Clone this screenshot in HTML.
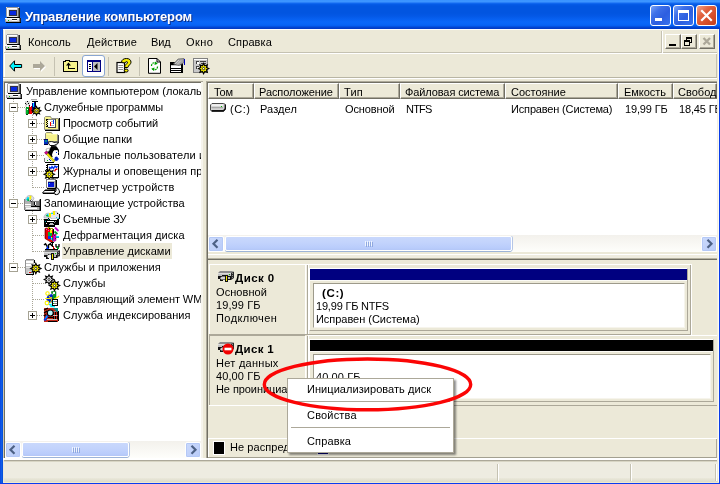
<!DOCTYPE html>
<html lang="ru"><head><meta charset="utf-8"><title>Управление компьютером</title>
<style>
*{box-sizing:border-box;margin:0;padding:0}
html,body{width:720px;height:484px;overflow:hidden;background:#ece9d8}
body{position:relative;font-family:"Liberation Sans","DejaVu Sans",sans-serif;font-size:11px;color:#000;line-height:13px;letter-spacing:-0.14px}
.a{position:absolute}
svg{position:absolute;overflow:visible}
.t{position:absolute;white-space:nowrap;height:13px;line-height:13px;will-change:transform}
.b{font-weight:bold}
#title{left:0;top:0;width:720px;height:29px;background:linear-gradient(180deg,#3a93ff 0,#3d95ff 1.5px,#2a80f8 2.5px,#0f66ee 3.5px,#055ae6 4.5px,#0255e0 6px,#0255e0 13px,#0458e6 16px,#0760f0 19px,#0a67f9 22px,#0866f8 24px,#0660f2 25.5px,#0452e2 26.5px,#0344d0 27.5px,#0238c0 29px)}
#title .cap{left:25px;top:9px;color:#fff;font-weight:bold;font-size:13px;letter-spacing:-0.12px;text-shadow:1px 1px 0 #0b2f8a;height:15px;line-height:15px}
#bl{left:0;top:29px;width:3px;height:455px;background:linear-gradient(90deg,#0838dc 0,#1262ea 1px,#0a58e2 2px,#0448d6 3px)}
#br{left:719px;top:29px;width:1px;height:455px;background:#0a3ce8}
#bb{left:0;top:483px;width:720px;height:1px;background:#0a3cf0}
.wb{border:1px solid;border-radius:3px}
.hdr{position:absolute;top:83px;height:17px;background:linear-gradient(180deg,#ebeadb 0,#ebeadb 13px,#e2dece 14px,#d6d2c2 15px,#cbc7b8 16px)}
.hc{position:absolute;top:83px;height:16px;background:#ece9d8;border-top:1px solid #fff;border-left:1px solid #fff;border-right:1px solid #716f64;border-bottom:1px solid #716f64;box-shadow:inset -1px -1px 0 #aca899}
.hsep{position:absolute;top:85px;width:2px;height:13px;background:linear-gradient(90deg,#c7c5b2 0,#c7c5b2 1px,#fff 1px)}
.sbtn{position:absolute;width:16px;height:16px;border:1px solid #fff;border-radius:2px;background:linear-gradient(135deg,#cbdafc,#b9cbf8);box-shadow:inset 0 0 0 1px #b4c8f6}
.thumb{position:absolute;height:15px;border:1px solid #fff;border-radius:2px;background:linear-gradient(180deg,#c9d8fc 0,#c2d3fc 6px,#b9ccfb 11px,#b3c7f7 13px);box-shadow:0 1px 0 #9db4d8,1px 0 0 #b5c6e6}
.track{position:absolute;height:17px;background:linear-gradient(180deg,#f3f1ec,#fefefb)}
.mi{position:absolute;left:307px}
</style></head><body>
<div id="title" class="a"><div class="t cap">Управление компьютером</div></div>
<svg style="left:5px;top:7px" width="16" height="16" viewBox="0 0 16 16" shape-rendering="crispEdges">
<rect x="1" y="0" width="13" height="10" fill="#e4e4e4"/><rect x="2" y="0" width="11" height="1" fill="#9a9a9a"/><rect x="1" y="1" width="1" height="9" fill="#a0a0a0"/><rect x="2" y="1" width="11" height="1" fill="#fff"/><rect x="2" y="1" width="1" height="8" fill="#fff"/>
<rect x="12" y="1" width="1" height="9" fill="#b0b0b0"/><rect x="13" y="1" width="1" height="9" fill="#606060"/><rect x="14" y="1" width="1" height="10" fill="#202020"/>
<rect x="4" y="3" width="8" height="6" fill="#303048"/><rect x="5" y="4" width="6" height="4" fill="#0828e0"/>
<rect x="2" y="10" width="13" height="1" fill="#000"/>
<rect x="0" y="11" width="15" height="4" fill="#e0e0e0"/><rect x="0" y="11" width="15" height="1" fill="#fff"/><rect x="0" y="12" width="1" height="3" fill="#a0a0a0"/>
<rect x="14" y="11" width="1" height="4" fill="#808080"/><rect x="15" y="11" width="1" height="5" fill="#202020"/><rect x="1" y="15" width="15" height="1" fill="#000"/><rect x="1" y="14" width="13" height="1" fill="#b0b0b0"/>
<rect x="3" y="13" width="1" height="1" fill="#00c000"/><rect x="7" y="12" width="5" height="1" fill="#202020"/><rect x="7" y="13" width="5" height="1" fill="#fff"/>
</svg>
<div id="bl" class="a"></div><div id="br" class="a"></div><div id="bb" class="a"></div>
<div class="a" style="left:650px;top:5px;width:21px;height:21px;border:1px solid #fff;border-radius:3px;background:linear-gradient(135deg,#7aa4f8 0,#3e70e8 30%,#2d5ee0 60%,#3872ee 100%)"><div class="a" style="left:4px;top:12px;width:7px;height:3px;background:#fff"></div></div>
<div class="a" style="left:673px;top:5px;width:21px;height:21px;border:1px solid #fff;border-radius:3px;background:linear-gradient(135deg,#7aa4f8 0,#3e70e8 30%,#2d5ee0 60%,#3872ee 100%)"><div class="a" style="left:4px;top:4px;width:11px;height:11px;border:1px solid #fff;border-top-width:3px"></div></div>
<div class="a" style="left:696px;top:5px;width:21px;height:21px;border:1px solid #fff;border-radius:3px;background:linear-gradient(135deg,#f0a48c 0,#e2633f 35%,#d44c28 70%,#c23e1c 100%)"><svg style="left:0;top:0" width="19" height="19" viewBox="0 0 19 19"><path d="M5 5L14 14M14 5L5 14" stroke="#fff" stroke-width="2.2" stroke-linecap="square"/></svg></div>
<div class="a" style="left:3px;top:29px;width:714px;height:1px;background:#fff"></div>
<div class="a" style="left:4px;top:29px;width:1px;height:48px;background:#fff"></div>
<svg style="left:5px;top:34px" width="16" height="16" viewBox="0 0 16 16" shape-rendering="crispEdges">
<rect x="1" y="0" width="13" height="10" fill="#e4e4e4"/><rect x="2" y="0" width="11" height="1" fill="#9a9a9a"/><rect x="1" y="1" width="1" height="9" fill="#a0a0a0"/><rect x="2" y="1" width="11" height="1" fill="#fff"/><rect x="2" y="1" width="1" height="8" fill="#fff"/>
<rect x="12" y="1" width="1" height="9" fill="#b0b0b0"/><rect x="13" y="1" width="1" height="9" fill="#606060"/><rect x="14" y="1" width="1" height="10" fill="#202020"/>
<rect x="4" y="3" width="8" height="6" fill="#303048"/><rect x="5" y="4" width="6" height="4" fill="#0828e0"/>
<rect x="2" y="10" width="13" height="1" fill="#000"/>
<rect x="0" y="11" width="15" height="4" fill="#e0e0e0"/><rect x="0" y="11" width="15" height="1" fill="#fff"/><rect x="0" y="12" width="1" height="3" fill="#a0a0a0"/>
<rect x="14" y="11" width="1" height="4" fill="#808080"/><rect x="15" y="11" width="1" height="5" fill="#202020"/><rect x="1" y="15" width="15" height="1" fill="#000"/><rect x="1" y="14" width="13" height="1" fill="#b0b0b0"/>
<rect x="3" y="13" width="1" height="1" fill="#00c000"/><rect x="7" y="12" width="5" height="1" fill="#202020"/><rect x="7" y="13" width="5" height="1" fill="#fff"/>
</svg>
<div class="t " style="left:28px;top:36px;letter-spacing:0.093px;">Консоль</div>
<div class="t " style="left:86.5px;top:36px;letter-spacing:0.205px;">Действие</div>
<div class="t " style="left:151.3px;top:36px;letter-spacing:-0.100px;">Вид</div>
<div class="t " style="left:186px;top:36px;letter-spacing:0.435px;">Окно</div>
<div class="t " style="left:228px;top:36px;letter-spacing:0.121px;">Справка</div>
<div class="a" style="left:4px;top:52px;width:713px;height:1px;background:#c5c2b2"></div>
<div class="a" style="left:4px;top:53px;width:713px;height:1px;background:#fff"></div>
<div class="a" style="left:665px;top:34px;width:16px;height:15px;background:#ece9d8;border-top:1px solid #fff;border-left:1px solid #fff;border-right:1px solid #716f64;border-bottom:1px solid #716f64;box-shadow:inset -1px -1px 0 #aca899"><div class="a" style="left:3px;top:9px;width:7px;height:2px;background:#000"></div></div>
<div class="a" style="left:681px;top:34px;width:16px;height:15px;background:#ece9d8;border-top:1px solid #fff;border-left:1px solid #fff;border-right:1px solid #716f64;border-bottom:1px solid #716f64;box-shadow:inset -1px -1px 0 #aca899"><div class="a" style="left:4px;top:2px;width:6px;height:6px;border:1px solid #000;border-top-width:2px"></div><div class="a" style="left:2px;top:5px;width:6px;height:6px;border:1px solid #000;border-top-width:2px;background:#ece9d8"></div></div>
<div class="a" style="left:699px;top:34px;width:16px;height:15px;background:#ece9d8;border-top:1px solid #fff;border-left:1px solid #fff;border-right:1px solid #716f64;border-bottom:1px solid #716f64;box-shadow:inset -1px -1px 0 #aca899"><svg style="left:0;top:0" width="14" height="13" viewBox="0 0 14 13"><path d="M3.5 3L10 9.5M10 3L3.5 9.5" stroke="#aca899" stroke-width="2.3"/></svg></div>
<div class="a" style="left:661px;top:31px;width:1px;height:22px;background:#c5c2b2"></div>
<div class="a" style="left:662px;top:31px;width:1px;height:22px;background:#fff"></div>
<div class="a" style="left:54px;top:57px;width:1px;height:19px;background:#c5c2b2"></div>
<div class="a" style="left:108px;top:57px;width:1px;height:19px;background:#c5c2b2"></div>
<div class="a" style="left:139px;top:57px;width:1px;height:19px;background:#c5c2b2"></div>
<svg style="left:9px;top:60px" width="14" height="12" viewBox="0 0 14 12"><path d="M5.500 0.800L0.700 6L5.500 11.200V7.500H12.600V4.500H5.500Z" fill="#00f6ff" stroke="#000" stroke-width="1" stroke-linejoin="miter"/></svg>
<svg style="left:33px;top:60px" width="14" height="13" viewBox="0 0 14 13"><path d="M7 1L12 6L7 11V8H0V4H7Z" fill="#fff" transform="translate(1,1)"/><path d="M7 1L12 6L7 11V8H0V4H7Z" fill="#aca899"/></svg>
<svg style="left:63px;top:59px" width="15" height="13" viewBox="0 0 15 13" shape-rendering="crispEdges"><path d="M0.5 2.5H2.5V1.5H6.5V2.5H14.5V12.5H0.5Z" fill="#f7f48c" stroke="#000"/><path d="M5 9.500H11.500M5.500 9.500V5" stroke="#000" fill="none" stroke-width="1.600"/><path d="M3 6.500L5.500 3.500L8 6.500Z" fill="#000" shape-rendering="auto"/></svg>
<div class="a" style="left:82px;top:55px;width:23px;height:22px;background:#fff;border:1px solid #8aa6d2;border-radius:3px"></div>
<svg style="left:87px;top:60px" width="14" height="12" viewBox="0 0 14 12" shape-rendering="crispEdges"><rect x="0" y="0" width="14" height="12" fill="#000080"/><rect x="1" y="2" width="4" height="9" fill="#fff"/><rect x="6" y="2" width="7" height="9" fill="#c0c0c0"/><path d="M10.500 3V10L7 6.500Z" fill="#000" shape-rendering="auto"/><rect x="2" y="4" width="2" height="1" fill="#000"/><rect x="2" y="6" width="2" height="1" fill="#000"/><rect x="2" y="8" width="2" height="1" fill="#000"/></svg>
<svg style="left:116px;top:58px" width="16" height="15" viewBox="0 0 16 15"><rect x="1" y="4.500" width="7.500" height="10" fill="#fff" stroke="#000" stroke-width="1.200"/><path d="M2.500 7.500H7M2.500 9.500H7M2.500 11.500H7" stroke="#8c8c8c"/><path d="M5.500 4.500C5.500 1.500 8 0.500 10.500 0.500C13.500 0.500 15 2.200 15 4.200C15 6.500 12.300 7.200 11.800 9.500H8.500C8.500 6.500 11.500 6 11.500 4.200C11.500 3.300 9.300 3.300 9 5Z" fill="#f4ec00" stroke="#000" stroke-width="1"/><ellipse cx="10.200" cy="12.600" rx="1.900" ry="1.500" fill="#f4ec00" stroke="#000"/></svg>
<svg style="left:148px;top:58px" width="13" height="16" viewBox="0 0 13 16"><path d="M0.500 0.500H9L12.500 4V15.300H0.500Z" fill="#fff" stroke="#000"/><path d="M9 0.500V4H12.500" fill="none" stroke="#000"/><path d="M3.500 8A3 3 0 0 1 8.500 5.500M9.500 8.500A3 3 0 0 1 4.500 11" stroke="#00a000" stroke-width="1.200" fill="none" stroke-dasharray="2 0.700"/><path d="M7 3.500L9.800 5.800L6.500 7Z M6 13L3.200 10.700L6.500 9.500Z" fill="#00a000"/></svg>
<svg style="left:170px;top:58px" width="16" height="15" viewBox="0 0 16 15" shape-rendering="crispEdges"><rect x="0" y="4" width="13" height="11" fill="#000"/><rect x="1" y="7" width="10" height="7" fill="#fff"/><rect x="1" y="7" width="10" height="1" fill="#c8c8c8"/><rect x="1" y="10" width="10" height="1" fill="#000"/><rect x="1" y="12" width="10" height="1" fill="#000"/><path d="M3.500 6L8 1L14 0.500V4.500L9 7.500Z" fill="#a4a4a4" stroke="#606060" stroke-width="0.700" shape-rendering="auto"/><path d="M5 6L9 2M7 6.500L11 2.500" stroke="#e0e0e0" stroke-width="0.700" shape-rendering="auto"/><rect x="14" y="1" width="1" height="6" fill="#0000c0"/></svg>
<svg style="left:193px;top:58px" width="17" height="16" viewBox="0 0 17 16" shape-rendering="crispEdges"><rect x="0" y="0" width="15" height="15" fill="#808080"/><rect x="1" y="1" width="13" height="13" fill="#c8c8c8"/><rect x="1" y="1" width="13" height="1" fill="#fff"/><rect x="3" y="3" width="3" height="3" fill="#fff"/><rect x="3" y="3" width="3" height="1" fill="#404040"/><rect x="3" y="3" width="1" height="3" fill="#404040"/><rect x="7" y="3" width="6" height="1" fill="#404040"/><rect x="8" y="5" width="5" height="1" fill="#404040"/><rect x="3" y="8" width="3" height="3" fill="#fff"/><rect x="3" y="8" width="3" height="1" fill="#404040"/><rect x="3" y="8" width="1" height="3" fill="#404040"/><rect x="7" y="7" width="4" height="1" fill="#404040"/><path d="M10.60 5.40L11.75 7.81L14.28 6.92L13.39 9.45L15.80 10.60L13.39 11.75L14.28 14.28L11.75 13.39L10.60 15.80L9.45 13.39L6.92 14.28L7.81 11.75L5.40 10.60L7.81 9.45L6.92 6.92L9.45 7.81Z" fill="#f4ec00" stroke="#000" stroke-width="1.1" shape-rendering="auto"/><circle cx="10.6" cy="10.6" r="1.14" fill="#fff" stroke="#000" stroke-width="0.700" shape-rendering="auto"/></svg>
<div class="a" style="left:716px;top:54px;width:1px;height:23px;background:#c5c2b2"></div>
<div class="a" style="left:3px;top:77px;width:714px;height:1px;background:#b9b6a4"></div>
<div class="a" style="left:3px;top:78px;width:714px;height:1px;background:#fff"></div>
<div class="a" style="left:3px;top:81px;width:200px;height:1px;background:#aca899"></div>
<div class="a" style="left:4px;top:82px;width:199px;height:1px;background:#716f64"></div>
<div class="a" style="left:3px;top:81px;width:1px;height:378px;background:#cfc8ad"></div>
<div class="a" style="left:4px;top:82px;width:1px;height:377px;background:#716f64"></div>
<div class="a" style="left:5px;top:83px;width:196px;height:375px;background:#fff"></div>
<div class="a" style="left:201px;top:82px;width:2px;height:377px;background:#f6f4ec"></div>
<div class="a" style="left:3px;top:458px;width:203px;height:2px;background:#fff"></div>
<div class="a" style="left:5px;top:83px;width:196px;height:358px;overflow:hidden">
<div class="a" style="left:-5px;top:-83px;width:720px;height:484px">
<div class="a" style="left:13px;top:99px;width:1px;height:169px;background:repeating-linear-gradient(180deg,#a9a697 0,#a9a697 1px,transparent 1px,transparent 2px)"></div>
<div class="a" style="left:32px;top:115px;width:1px;height:73px;background:repeating-linear-gradient(180deg,#a9a697 0,#a9a697 1px,transparent 1px,transparent 2px)"></div>
<div class="a" style="left:32px;top:211px;width:1px;height:41px;background:repeating-linear-gradient(180deg,#a9a697 0,#a9a697 1px,transparent 1px,transparent 2px)"></div>
<div class="a" style="left:32px;top:275px;width:1px;height:41px;background:repeating-linear-gradient(180deg,#a9a697 0,#a9a697 1px,transparent 1px,transparent 2px)"></div>
<svg style="left:6px;top:83px" width="16" height="16" viewBox="0 0 16 16" shape-rendering="crispEdges">
<rect x="1" y="0" width="13" height="10" fill="#e4e4e4"/><rect x="2" y="0" width="11" height="1" fill="#9a9a9a"/><rect x="1" y="1" width="1" height="9" fill="#a0a0a0"/><rect x="2" y="1" width="11" height="1" fill="#fff"/><rect x="2" y="1" width="1" height="8" fill="#fff"/>
<rect x="12" y="1" width="1" height="9" fill="#b0b0b0"/><rect x="13" y="1" width="1" height="9" fill="#606060"/><rect x="14" y="1" width="1" height="10" fill="#202020"/>
<rect x="4" y="3" width="8" height="6" fill="#303048"/><rect x="5" y="4" width="6" height="4" fill="#0828e0"/>
<rect x="2" y="10" width="13" height="1" fill="#000"/>
<rect x="0" y="11" width="15" height="4" fill="#e0e0e0"/><rect x="0" y="11" width="15" height="1" fill="#fff"/><rect x="0" y="12" width="1" height="3" fill="#a0a0a0"/>
<rect x="14" y="11" width="1" height="4" fill="#808080"/><rect x="15" y="11" width="1" height="5" fill="#202020"/><rect x="1" y="15" width="15" height="1" fill="#000"/><rect x="1" y="14" width="13" height="1" fill="#b0b0b0"/>
<rect x="3" y="13" width="1" height="1" fill="#00c000"/><rect x="7" y="12" width="5" height="1" fill="#202020"/><rect x="7" y="13" width="5" height="1" fill="#fff"/>
</svg>
<div class="t " style="left:26px;top:85px;letter-spacing:-0.008px;">Управление компьютером (локаль</div>
<div class="a" style="left:18px;top:107px;width:7px;height:1px;background:repeating-linear-gradient(90deg,#a9a697 0,#a9a697 1px,transparent 1px,transparent 2px)"></div>
<div class="a" style="left:9px;top:103px;width:9px;height:9px;border:1px solid #a5a293;background:#fff"><div class="a" style="left:1px;top:3px;width:5px;height:1px;background:#000"></div></div>
<svg style="left:25px;top:99px" width="16" height="16" viewBox="0 0 16 16" shape-rendering="crispEdges"><rect x="6" y="0" width="6" height="1" fill="#a8a8a8"/><rect x="5" y="1" width="7" height="1" fill="#ececec"/><rect x="7" y="2" width="6" height="1" fill="#000"/><rect x="10" y="3" width="1" height="5" fill="#000"/><rect x="0" y="2" width="5" height="6" fill="#dcdcdc"/><rect x="2" y="2" width="1" height="1" fill="#000"/><rect x="0" y="4" width="1" height="1" fill="#000"/><rect x="3" y="4" width="1" height="1" fill="#000"/><rect x="1" y="5" width="1" height="1" fill="#808080"/><rect x="4" y="6" width="1" height="2" fill="#000"/><rect x="2" y="6" width="1" height="2" fill="#fff"/><rect x="1" y="8" width="3" height="7" fill="#00b428"/><rect x="1" y="8" width="1" height="1" fill="#007818"/><rect x="2" y="10" width="1" height="1" fill="#fff"/><rect x="3" y="9" width="1" height="6" fill="#006414"/><rect x="0" y="9" width="1" height="6" fill="#c8c8c8"/><rect x="1" y="15" width="2" height="1" fill="#004c10"/><rect x="4" y="7" width="3" height="8" fill="#f00000"/><rect x="4" y="6" width="1" height="1" fill="#000"/><rect x="5" y="7" width="1" height="1" fill="#fff"/><rect x="4" y="8" width="1" height="6" fill="#b00000"/><rect x="7" y="8" width="1" height="6" fill="#400000"/><rect x="7" y="3" width="3" height="8" fill="#0000a8"/><rect x="8" y="4" width="1" height="5" fill="#00e4ff"/><rect x="7" y="3" width="2" height="1" fill="#fff"/><path d="M11.50 7.50L12.45 9.50L14.54 8.76L13.80 10.85L15.80 11.80L13.80 12.75L14.54 14.84L12.45 14.10L11.50 16.10L10.55 14.10L8.46 14.84L9.20 12.75L7.20 11.80L9.20 10.85L8.46 8.76L10.55 9.50Z" fill="#f4ec00" stroke="#000" stroke-width="1.1" shape-rendering="auto"/><circle cx="11.5" cy="11.8" r="0.95" fill="#fff" stroke="#000" stroke-width="0.700" shape-rendering="auto"/></svg>
<div class="t " style="left:44px;top:101px;letter-spacing:-0.067px;">Служебные программы</div>
<div class="a" style="left:37px;top:123px;width:7px;height:1px;background:repeating-linear-gradient(90deg,#a9a697 0,#a9a697 1px,transparent 1px,transparent 2px)"></div>
<div class="a" style="left:28px;top:119px;width:9px;height:9px;border:1px solid #a5a293;background:#fff"><div class="a" style="left:1px;top:3px;width:5px;height:1px;background:#000"></div><div class="a" style="left:3px;top:1px;width:1px;height:5px;background:#000"></div></div>
<svg style="left:44px;top:115px" width="16" height="16" viewBox="0 0 16 16" shape-rendering="crispEdges"><path d="M0.500 2.500V14.500H14.500V3.500H7.500L6.500 1.500H1.500Z" fill="#f6f28a" stroke="#909080" stroke-width="1" shape-rendering="auto"/><rect x="15" y="3" width="1" height="13" fill="#000"/><rect x="1" y="15" width="15" height="1" fill="#000"/><rect x="14" y="4" width="1" height="11" fill="#606060"/><rect x="4" y="4" width="8" height="9" fill="#fff"/><rect x="4" y="4" width="8" height="1" fill="#808080"/><rect x="4" y="12" width="8" height="1" fill="#404040"/><rect x="11" y="4" width="1" height="9" fill="#404040"/><rect x="2" y="4" width="2" height="8" fill="#000"/><rect x="3" y="5" width="1" height="1" fill="#f6f28a"/><rect x="3" y="7" width="1" height="1" fill="#f6f28a"/><rect x="3" y="9" width="1" height="1" fill="#f6f28a"/><rect x="2" y="6" width="1" height="1" fill="#f6f28a"/><rect x="2" y="8" width="1" height="1" fill="#f6f28a"/><rect x="2" y="10" width="1" height="1" fill="#f6f28a"/><rect x="9" y="5" width="1" height="4" fill="#0040f0"/><rect x="6" y="7" width="1" height="4" fill="#f00000"/><rect x="7" y="6" width="2" height="1" fill="#b0b0b0"/><rect x="7" y="10" width="3" height="1" fill="#b0b0b0"/><rect x="7" y="8" width="2" height="1" fill="#d0d0d0"/></svg>
<div class="t " style="left:63px;top:117px;letter-spacing:-0.098px;">Просмотр событий</div>
<div class="a" style="left:37px;top:139px;width:7px;height:1px;background:repeating-linear-gradient(90deg,#a9a697 0,#a9a697 1px,transparent 1px,transparent 2px)"></div>
<div class="a" style="left:28px;top:135px;width:9px;height:9px;border:1px solid #a5a293;background:#fff"><div class="a" style="left:1px;top:3px;width:5px;height:1px;background:#000"></div><div class="a" style="left:3px;top:1px;width:1px;height:5px;background:#000"></div></div>
<svg style="left:44px;top:131px" width="16" height="16" viewBox="0 0 16 16" shape-rendering="crispEdges"><path d="M1.500 2.500V10.500H13.500V3.500H8.500L7.500 1.500H2.500Z" fill="#f6f28a" stroke="#909080" stroke-width="1" shape-rendering="auto"/><rect x="14" y="4" width="1" height="8" fill="#404040"/><rect x="2" y="3" width="11" height="1" fill="#fbfaa8"/><rect x="0" y="8" width="4" height="6" fill="#0030c0"/><rect x="0" y="8" width="4" height="1" fill="#000060"/><rect x="1" y="9" width="2" height="2" fill="#008890"/><rect x="0" y="13" width="4" height="1" fill="#000040"/><path d="M4 11.500C6 10 9 10.500 10 11.500L14 11V12.500L10 14.500H6Z" fill="#fff" stroke="#000" stroke-width="0.9" shape-rendering="auto"/><path d="M7 15.200H12.500" fill="none" stroke="#000" stroke-width="1.4" shape-rendering="auto"/></svg>
<div class="t " style="left:63px;top:133px;letter-spacing:0.099px;">Общие папки</div>
<div class="a" style="left:37px;top:155px;width:7px;height:1px;background:repeating-linear-gradient(90deg,#a9a697 0,#a9a697 1px,transparent 1px,transparent 2px)"></div>
<div class="a" style="left:28px;top:151px;width:9px;height:9px;border:1px solid #a5a293;background:#fff"><div class="a" style="left:1px;top:3px;width:5px;height:1px;background:#000"></div><div class="a" style="left:3px;top:1px;width:1px;height:5px;background:#000"></div></div>
<svg style="left:44px;top:147px" width="16" height="16" viewBox="0 0 16 16" shape-rendering="crispEdges"><path d="M7 0H13L15 3V6H13L11 3L9 5L8 8L9 10L7 12L4 8L3 4Z" fill="#000" shape-rendering="auto"/><path d="M2 2L6 1L5 4L2.500 5Z" fill="#fff" stroke="#909090" stroke-width="0.6" shape-rendering="auto"/><path d="M10 3.500L13.500 3L14.500 6L13 9.500L12 12H9L8.500 8L9 5Z" fill="#fff" shape-rendering="auto"/><rect x="12" y="5" width="1" height="1" fill="#0030e0"/><rect x="14" y="6" width="1" height="2" fill="#000"/><path d="M11 10L13 9.500L15 12L13 14L10 13.500Z" fill="#0020c0" shape-rendering="auto"/><rect x="1" y="10" width="8" height="5" fill="#f4f4f4"/><rect x="1" y="15" width="9" height="1" fill="#000"/><rect x="0" y="11" width="1" height="4" fill="#808080"/><rect x="3" y="13" width="1" height="1" fill="#00b000"/><rect x="5" y="12" width="1" height="1" fill="#0020c0"/><rect x="6" y="13" width="1" height="1" fill="#0020c0"/><path d="M1 6L3 5L11 14L9.500 15Z" fill="#f4ec00" stroke="#8a8000" stroke-width="0.5" shape-rendering="auto"/><path d="M0.500 5.500L2.500 4L4 6L2 7.500Z" fill="#d000a0" stroke="#800040" stroke-width="0.5" shape-rendering="auto"/></svg>
<div class="t " style="left:63px;top:149px;letter-spacing:0.143px;">Локальные пользователи и</div>
<div class="a" style="left:37px;top:171px;width:7px;height:1px;background:repeating-linear-gradient(90deg,#a9a697 0,#a9a697 1px,transparent 1px,transparent 2px)"></div>
<div class="a" style="left:28px;top:167px;width:9px;height:9px;border:1px solid #a5a293;background:#fff"><div class="a" style="left:1px;top:3px;width:5px;height:1px;background:#000"></div><div class="a" style="left:3px;top:1px;width:1px;height:5px;background:#000"></div></div>
<svg style="left:44px;top:163px" width="16" height="16" viewBox="0 0 16 16" shape-rendering="crispEdges"><rect x="3" y="1" width="12" height="14" fill="#000"/><rect x="4" y="2" width="10" height="12" fill="#fff"/><rect x="2" y="2" width="1" height="1" fill="#000"/><rect x="2" y="4" width="1" height="1" fill="#000"/><rect x="2" y="6" width="1" height="1" fill="#000"/><rect x="7" y="15" width="7" height="1" fill="#808080"/><path d="M5 4L7 5.500L8 3.500L9.500 5.500L11 3L12.500 4.500L13.500 3" fill="none" stroke="#0030f0" stroke-width="1.3" shape-rendering="auto"/><path d="M10.500 8.500L11.500 6.500L13.500 6" fill="none" stroke="#f00000" stroke-width="1.4" shape-rendering="auto"/><path d="M5.30 6.10L6.45 8.51L8.98 7.62L8.09 10.15L10.50 11.30L8.09 12.45L8.98 14.98L6.45 14.09L5.30 16.50L4.15 14.09L1.62 14.98L2.51 12.45L0.10 11.30L2.51 10.15L1.62 7.62L4.15 8.51Z" fill="#f4ec00" stroke="#000" stroke-width="1.1" shape-rendering="auto"/><circle cx="5.3" cy="11.3" r="1.14" fill="#fff" stroke="#000" stroke-width="0.700" shape-rendering="auto"/></svg>
<div class="t " style="left:63px;top:165px;letter-spacing:0.027px;">Журналы и оповещения пр</div>
<div class="a" style="left:33px;top:187px;width:11px;height:1px;background:repeating-linear-gradient(90deg,#a9a697 0,#a9a697 1px,transparent 1px,transparent 2px)"></div>
<svg style="left:44px;top:179px" width="16" height="16" viewBox="0 0 16 16" shape-rendering="crispEdges"><rect x="2" y="0" width="10" height="9" fill="#b8b8b8"/><rect x="2" y="0" width="10" height="1" fill="#808080"/><rect x="2" y="1" width="1" height="8" fill="#808080"/><rect x="3" y="1" width="8" height="1" fill="#fff"/><rect x="3" y="2" width="1" height="6" fill="#fff"/><rect x="11" y="1" width="1" height="9" fill="#606060"/><rect x="12" y="1" width="1" height="9" fill="#000"/><rect x="3" y="9" width="9" height="1" fill="#000"/><rect x="4" y="3" width="6" height="5" fill="#0818d8"/><rect x="5" y="4" width="1" height="1" fill="#00e0ff"/><rect x="4" y="3" width="6" height="1" fill="#000090"/><path d="M1 11L11.500 10.500L10 14H-1.500Z" fill="#fff" stroke="#000" stroke-width="0.9" shape-rendering="auto"/><rect x="1" y="11" width="10" height="1" fill="#000"/><rect x="2" y="12" width="1" height="1" fill="#fff"/><rect x="4" y="12" width="1" height="1" fill="#fff"/><rect x="6" y="12" width="1" height="1" fill="#fff"/><rect x="8" y="12" width="1" height="1" fill="#fff"/><rect x="-1" y="14" width="11" height="1" fill="#000"/><path d="M12 8C14 9 15.500 11 15.500 13C15.500 15 13 16 11 15.500L10.500 13.500L12 12Z" fill="#f0f0f0" stroke="#000" stroke-width="1" shape-rendering="auto"/></svg>
<div class="t " style="left:63px;top:181px;letter-spacing:0.214px;">Диспетчер устройств</div>
<div class="a" style="left:18px;top:203px;width:7px;height:1px;background:repeating-linear-gradient(90deg,#a9a697 0,#a9a697 1px,transparent 1px,transparent 2px)"></div>
<div class="a" style="left:9px;top:199px;width:9px;height:9px;border:1px solid #a5a293;background:#fff"><div class="a" style="left:1px;top:3px;width:5px;height:1px;background:#000"></div></div>
<svg style="left:25px;top:195px" width="16" height="16" viewBox="0 0 16 16" shape-rendering="crispEdges"><rect x="-1" y="4" width="16" height="11" fill="#b4b4b4"/><rect x="-1" y="4" width="1" height="11" fill="#808080"/><rect x="15" y="4" width="1" height="12" fill="#000"/><rect x="0" y="15" width="15" height="1" fill="#000"/><rect x="14" y="5" width="1" height="10" fill="#606060"/><rect x="7" y="4" width="7" height="1" fill="#fff"/><rect x="7" y="5" width="7" height="1" fill="#f0f0f0"/><rect x="6" y="6" width="8" height="6" fill="#808080"/><rect x="9" y="7" width="1" height="3" fill="#000"/><rect x="10" y="7" width="1" height="3" fill="#fff"/><rect x="6" y="11" width="9" height="1" fill="#000"/><rect x="10" y="10" width="1" height="1" fill="#000"/><rect x="0" y="9" width="6" height="1" fill="#fff"/><rect x="0" y="11" width="6" height="1" fill="#e8e8e8"/><rect x="1" y="13" width="11" height="1" fill="#fff"/><rect x="1" y="12" width="11" height="1" fill="#d8d8d8"/><path d="M0.500 6C0 2 3 0 6 0.500C8 1 9 2.500 9 4L6.500 6.500Z" fill="#dcdce8" stroke="#9090a0" stroke-width="0.5" shape-rendering="auto"/><path d="M1 5L2.500 2L4.500 2.500L3.500 6Z" fill="#00d8f0" shape-rendering="auto"/><path d="M2 5.500L3 3.500L5 6.500Z" fill="#00b030" shape-rendering="auto"/><path d="M4.500 0.800H6.500L6 4.500H4.500Z" fill="#f8f000" shape-rendering="auto"/><path d="M5 5.500L6.500 4.500L7.500 6L6 7Z" fill="#000" shape-rendering="auto"/><rect x="6" y="5" width="1" height="1" fill="#fff"/></svg>
<div class="t " style="left:44px;top:197px;letter-spacing:0.025px;">Запоминающие устройства</div>
<div class="a" style="left:37px;top:219px;width:7px;height:1px;background:repeating-linear-gradient(90deg,#a9a697 0,#a9a697 1px,transparent 1px,transparent 2px)"></div>
<div class="a" style="left:28px;top:215px;width:9px;height:9px;border:1px solid #a5a293;background:#fff"><div class="a" style="left:1px;top:3px;width:5px;height:1px;background:#000"></div><div class="a" style="left:3px;top:1px;width:1px;height:5px;background:#000"></div></div>
<svg style="left:44px;top:211px" width="16" height="16" viewBox="0 0 16 16" shape-rendering="crispEdges"><path d="M0 7C0 3 3 1.500 6 2.500L8 7Z" fill="#dcdce8" stroke="#8890a0" stroke-width="0.5" shape-rendering="auto"/><path d="M6 6C6 1 10 -0.500 13 1C15.500 2.500 16 5 15 8L8 8Z" fill="#e4e4ee" stroke="#8890a0" stroke-width="0.5" shape-rendering="auto"/><path d="M1.500 5L3.500 3L5 6Z" fill="#00b030" shape-rendering="auto"/><path d="M2.500 3.500L4 2.500L5 5Z" fill="#00d8f0" shape-rendering="auto"/><rect x="5" y="2" width="2" height="4" fill="#f8f000"/><rect x="7" y="2" width="2" height="1" fill="#00e0f0"/><rect x="9" y="0" width="2" height="4" fill="#f8f000"/><rect x="13" y="2" width="1" height="1" fill="#000"/><rect x="15" y="3" width="1" height="5" fill="#000"/><rect x="12" y="6" width="1" height="1" fill="#00d0e0"/><rect x="14" y="7" width="1" height="1" fill="#00d0e0"/><rect x="0" y="8" width="15" height="6" fill="#000"/><rect x="0" y="14" width="11" height="2" fill="#000"/><rect x="4" y="7" width="1" height="1" fill="#000"/><rect x="6" y="8" width="7" height="1" fill="#fff"/><rect x="3" y="10" width="7" height="1" fill="#fff"/><rect x="4" y="8" width="1" height="1" fill="#00a0a8"/><rect x="1" y="10" width="1" height="1" fill="#00a0a8"/><rect x="2" y="12" width="1" height="1" fill="#fff"/><rect x="5" y="13" width="5" height="1" fill="#c0c0c0"/><rect x="6" y="12" width="3" height="1" fill="#c0c0c0"/><rect x="11" y="10" width="1" height="1" fill="#909090"/><rect x="10" y="11" width="1" height="1" fill="#909090"/></svg>
<div class="t " style="left:63px;top:213px;letter-spacing:-0.186px;">Съемные ЗУ</div>
<div class="a" style="left:33px;top:235px;width:11px;height:1px;background:repeating-linear-gradient(90deg,#a9a697 0,#a9a697 1px,transparent 1px,transparent 2px)"></div>
<svg style="left:44px;top:227px" width="16" height="16" viewBox="0 0 16 16" shape-rendering="crispEdges"><path d="M1 1.500L3 1L9 3.500V15L7.500 15.500L1 11.500Z" fill="#f00000" stroke="#800000" stroke-width="0.7" shape-rendering="auto"/><rect x="1" y="2" width="1" height="10" fill="#a00000"/><rect x="2" y="2" width="1" height="1" fill="#e040e0"/><rect x="4" y="3" width="1" height="1" fill="#e040e0"/><rect x="4" y="5" width="4" height="4" fill="#00b030"/><rect x="5" y="7" width="1" height="1" fill="#008090"/><rect x="4" y="9" width="3" height="3" fill="#0030f0"/><rect x="7" y="11" width="1" height="2" fill="#00e0ff"/><rect x="8" y="10" width="1" height="4" fill="#008080"/><rect x="7" y="10" width="1" height="1" fill="#f8f000"/><rect x="6" y="3" width="2" height="3" fill="#f8f000"/><rect x="4" y="0" width="2" height="2" fill="#c0b000"/><rect x="6" y="1" width="3" height="2" fill="#a09000"/><rect x="5" y="1" width="1" height="1" fill="#000"/><rect x="7" y="2" width="1" height="1" fill="#fff"/><rect x="9" y="2" width="1" height="6" fill="#000"/><path d="M9 7.500L12 7V13.500L10 14.500L9 13Z" fill="#d000d0" stroke="#600060" stroke-width="0.5" shape-rendering="auto"/><rect x="10" y="8" width="1" height="1" fill="#a00000"/><rect x="11" y="11" width="1" height="1" fill="#a00000"/><path d="M11 0.500L14.500 4" fill="none" stroke="#c800c8" stroke-width="1.8" shape-rendering="auto"/><path d="M10.500 4.500L13.500 7" fill="none" stroke="#00a828" stroke-width="1.8" shape-rendering="auto"/><rect x="12" y="9" width="3" height="1" fill="#00e0f0"/><rect x="12" y="10" width="3" height="1" fill="#00a0b0"/></svg>
<div class="t " style="left:63px;top:229px;letter-spacing:0.063px;">Дефрагментация диска</div>
<div class="a" style="left:33px;top:251px;width:11px;height:1px;background:repeating-linear-gradient(90deg,#a9a697 0,#a9a697 1px,transparent 1px,transparent 2px)"></div>
<svg style="left:44px;top:243px" width="16" height="16" viewBox="0 0 16 16" shape-rendering="crispEdges"><path d="M0 2L1.500 0.800L3 3L3.500 5" fill="none" stroke="#000" stroke-width="1.4" shape-rendering="auto"/><path d="M4.500 5V2L6.500 0.800L8 3" fill="none" stroke="#000" stroke-width="1.4" shape-rendering="auto"/><rect x="8" y="0" width="1" height="4" fill="#000"/><rect x="7" y="-1" width="3" height="1" fill="#000"/><path d="M12 1V3.500L13 4.500M15 1V3.500L14 4.500" fill="none" stroke="#000" stroke-width="1.3" shape-rendering="auto"/><rect x="3" y="3" width="1" height="3" fill="#0030f0"/><rect x="2" y="5" width="3" height="1" fill="#0030f0"/><rect x="9" y="3" width="1" height="3" fill="#c00000"/><rect x="9" y="5" width="2" height="1" fill="#c00000"/><rect x="13" y="3" width="1" height="3" fill="#00b020"/><rect x="13" y="5" width="2" height="1" fill="#00b020"/><rect x="1" y="6" width="13" height="1" fill="#000"/><path d="M1 7H15L14 9H0Z" fill="#8c8c8c" shape-rendering="auto"/><rect x="0" y="9" width="13" height="3" fill="#c2c2c2"/><rect x="0" y="9" width="13" height="1" fill="#dcdcdc"/><path d="M13 9L16 7V13L13 15Z" fill="#2a2a2a" shape-rendering="auto"/><rect x="14" y="9" width="1" height="1" fill="#909090"/><rect x="14" y="11" width="1" height="1" fill="#909090"/><rect x="14" y="13" width="1" height="1" fill="#909090"/><path d="M0 12H4V11H8V12H13V15H5V16H2V14H0Z" fill="#101010" shape-rendering="auto"/><path d="M3 13L5 11.500H7.500V15H4Z" fill="#f0f0f0" shape-rendering="auto"/><rect x="9" y="12" width="3" height="2" fill="#b8b8b8"/><rect x="7" y="10" width="3" height="7" fill="#101010"/><rect x="8" y="11" width="1" height="5" fill="#f0e800"/><rect x="11" y="10" width="1" height="1" fill="#00c000"/></svg>
<div class="a" style="left:62px;top:243px;width:110px;height:16px;background:#ece9d8"></div>
<div class="t " style="left:63px;top:245px;letter-spacing:0.025px;">Управление дисками</div>
<div class="a" style="left:18px;top:267px;width:7px;height:1px;background:repeating-linear-gradient(90deg,#a9a697 0,#a9a697 1px,transparent 1px,transparent 2px)"></div>
<div class="a" style="left:9px;top:263px;width:9px;height:9px;border:1px solid #a5a293;background:#fff"><div class="a" style="left:1px;top:3px;width:5px;height:1px;background:#000"></div></div>
<svg style="left:25px;top:259px" width="16" height="16" viewBox="0 0 16 16" shape-rendering="crispEdges"><rect x="0" y="1" width="9" height="14" fill="#c4c4c4"/><rect x="0" y="1" width="1" height="14" fill="#909090"/><rect x="1" y="0" width="8" height="1" fill="#909090"/><rect x="1" y="15" width="8" height="1" fill="#000"/><rect x="9" y="1" width="1" height="3" fill="#000"/><rect x="8" y="13" width="1" height="2" fill="#000"/><rect x="1" y="2" width="7" height="2" fill="#fff"/><rect x="1" y="5" width="6" height="2" fill="#fff"/><rect x="1" y="8" width="5" height="1" fill="#e8e8e8"/><rect x="4" y="13" width="2" height="1" fill="#f00000"/><rect x="3" y="12" width="4" height="3" fill="#d0e0e0"/><rect x="4" y="13" width="2" height="1" fill="#f00000"/><path d="M10.80 4.30L11.95 6.71L14.48 5.82L13.59 8.35L16.00 9.50L13.59 10.65L14.48 13.18L11.95 12.29L10.80 14.70L9.65 12.29L7.12 13.18L8.01 10.65L5.60 9.50L8.01 8.35L7.12 5.82L9.65 6.71Z" fill="#f4ec00" stroke="#000" stroke-width="1.1" shape-rendering="auto"/><circle cx="10.8" cy="9.5" r="1.14" fill="#fff" stroke="#000" stroke-width="0.700" shape-rendering="auto"/></svg>
<div class="t " style="left:44px;top:261px;letter-spacing:0.014px;">Службы и приложения</div>
<div class="a" style="left:33px;top:283px;width:11px;height:1px;background:repeating-linear-gradient(90deg,#a9a697 0,#a9a697 1px,transparent 1px,transparent 2px)"></div>
<svg style="left:44px;top:275px" width="16" height="16" viewBox="0 0 16 16" shape-rendering="crispEdges"><path d="M5.00 -0.30L6.07 1.93L8.39 1.11L7.57 3.43L9.80 4.50L7.57 5.57L8.39 7.89L6.07 7.07L5.00 9.30L3.93 7.07L1.61 7.89L2.43 5.57L0.20 4.50L2.43 3.43L1.61 1.11L3.93 1.93Z" fill="#f4f4f4" stroke="#000" stroke-width="1.1" shape-rendering="auto"/><circle cx="5" cy="4.5" r="1.06" fill="#fff" stroke="#000" stroke-width="0.700" shape-rendering="auto"/><path d="M10.50 5.30L11.65 7.71L14.18 6.82L13.29 9.35L15.70 10.50L13.29 11.65L14.18 14.18L11.65 13.29L10.50 15.70L9.35 13.29L6.82 14.18L7.71 11.65L5.30 10.50L7.71 9.35L6.82 6.82L9.35 7.71Z" fill="#f4ec00" stroke="#000" stroke-width="1.1" shape-rendering="auto"/><circle cx="10.5" cy="10.5" r="1.14" fill="#fff" stroke="#000" stroke-width="0.700" shape-rendering="auto"/></svg>
<div class="t " style="left:63px;top:277px;letter-spacing:0.154px;">Службы</div>
<div class="a" style="left:33px;top:299px;width:11px;height:1px;background:repeating-linear-gradient(90deg,#a9a697 0,#a9a697 1px,transparent 1px,transparent 2px)"></div>
<svg style="left:44px;top:291px" width="16" height="16" viewBox="0 0 16 16" shape-rendering="crispEdges"><path d="M4 4L8 3L10 6L9 11L5 12L2 8Z" fill="#0020d0" shape-rendering="auto"/><path d="M7.500 0.500H12V7.500L10 8.500L8.500 7L9.500 2.500H7.500Z" fill="#00a020" stroke="#006010" stroke-width="0.5" shape-rendering="auto"/><rect x="9" y="1" width="2" height="2" fill="#fff"/><path d="M1 7.500H6L8 6.500M10 8L14 6L15 5" fill="none" stroke="#f8f000" stroke-width="1.2" shape-rendering="auto"/><circle cx="3.500" cy="2.500" r="1.700" fill="none" stroke="#f8f000" stroke-width="1.100" shape-rendering="auto"/><circle cx="3" cy="12" r="1.900" fill="#fff" stroke="#f8f000" stroke-width="1.100" shape-rendering="auto"/><path d="M5 5L8 9L6 12" fill="none" stroke="#f8f000" stroke-width="1" shape-rendering="auto"/><path d="M5 13.500H7V15.500H11" fill="none" stroke="#00e8f8" stroke-width="1.5" shape-rendering="auto"/><rect x="8" y="8" width="6" height="7" fill="#000"/><rect x="9" y="9" width="4" height="5" fill="#fff"/><rect x="9" y="10" width="1" height="1" fill="#00e0f0"/><rect x="9" y="12" width="1" height="1" fill="#00b020"/><rect x="10" y="10" width="3" height="1" fill="#808080"/><rect x="10" y="12" width="3" height="1" fill="#808080"/></svg>
<div class="t " style="left:63px;top:293px;letter-spacing:-0.059px;">Управляющий элемент WM</div>
<div class="a" style="left:37px;top:315px;width:7px;height:1px;background:repeating-linear-gradient(90deg,#a9a697 0,#a9a697 1px,transparent 1px,transparent 2px)"></div>
<div class="a" style="left:28px;top:311px;width:9px;height:9px;border:1px solid #a5a293;background:#fff"><div class="a" style="left:1px;top:3px;width:5px;height:1px;background:#000"></div><div class="a" style="left:3px;top:1px;width:1px;height:5px;background:#000"></div></div>
<svg style="left:44px;top:307px" width="16" height="16" viewBox="0 0 16 16" shape-rendering="crispEdges"><rect x="0" y="1" width="14" height="14" fill="#c02818"/><path d="M9 1H14V6Z" fill="#008888" shape-rendering="auto"/><rect x="14" y="4" width="1" height="10" fill="#000"/><path d="M0 3L4 1M0 6L3 4M0 9L2 7.500" fill="none" stroke="#000" stroke-width="1.2" shape-rendering="auto"/><rect x="9" y="5" width="1" height="3" fill="#000"/><rect x="11" y="5" width="1" height="3" fill="#000"/><rect x="13" y="5" width="1" height="3" fill="#000"/><rect x="9" y="4" width="3" height="1" fill="#909090"/><rect x="9" y="8" width="4" height="1" fill="#c8c8c8"/><rect x="9" y="9" width="1" height="3" fill="#000"/><rect x="11" y="9" width="1" height="3" fill="#000"/><rect x="13" y="9" width="1" height="3" fill="#000"/><rect x="4" y="10" width="5" height="1" fill="#000"/><rect x="3" y="12" width="10" height="1" fill="#c8c8c8"/><rect x="4" y="14" width="9" height="1" fill="#000"/><circle cx="6.300" cy="6" r="3" fill="#b8f4fc" stroke="#000" stroke-width="1.100" shape-rendering="auto"/><path d="M3.500 8.500L0.500 13.500" fill="none" stroke="#0030f0" stroke-width="2.4" shape-rendering="auto"/><path d="M3 9L1.500 11.500" fill="none" stroke="#00c8ff" stroke-width="1" shape-rendering="auto"/></svg>
<div class="t " style="left:63px;top:309px;letter-spacing:0.063px;">Служба индексирования</div>
</div></div>
<div class="track" style="left:5px;top:441px;width:196px"></div>
<div class="sbtn" style="left:5px;top:442px"></div>
<svg style="left:5px;top:442px" width="16" height="16" viewBox="0 0 16 16"><path d="M9.500 3.700L5.500 7.700L9.500 11.700" fill="none" stroke="#4d6185" stroke-width="2.200"/></svg>
<div class="sbtn" style="left:185px;top:442px"></div>
<svg style="left:185px;top:442px" width="16" height="16" viewBox="0 0 16 16"><path d="M6.500 3.700L10.500 7.700L6.500 11.700" fill="none" stroke="#4d6185" stroke-width="2.200"/></svg>
<div class="thumb" style="left:22px;top:442px;width:107px"></div>
<div class="a" style="left:72px;top:447px;width:1px;height:5px;background:#eef4fe"></div>
<div class="a" style="left:73px;top:448px;width:1px;height:5px;background:#8fa8e0"></div>
<div class="a" style="left:74px;top:447px;width:1px;height:5px;background:#eef4fe"></div>
<div class="a" style="left:75px;top:448px;width:1px;height:5px;background:#8fa8e0"></div>
<div class="a" style="left:76px;top:447px;width:1px;height:5px;background:#eef4fe"></div>
<div class="a" style="left:77px;top:448px;width:1px;height:5px;background:#8fa8e0"></div>
<div class="a" style="left:78px;top:447px;width:1px;height:5px;background:#eef4fe"></div>
<div class="a" style="left:79px;top:448px;width:1px;height:5px;background:#8fa8e0"></div>
<div class="a" style="left:206px;top:81px;width:511px;height:1px;background:#aca899"></div>
<div class="a" style="left:206px;top:82px;width:511px;height:1px;background:#716f64"></div>
<div class="a" style="left:206px;top:81px;width:1px;height:172px;background:#aca899"></div>
<div class="a" style="left:207px;top:82px;width:1px;height:171px;background:#716f64"></div>
<div class="a" style="left:208px;top:83px;width:509px;height:152px;background:#fff"></div>
<div class="hc" style="left:208px;width:46px"></div>
<div class="t " style="left:213.5px;top:86px;letter-spacing:-0.247px;">Том</div>
<div class="hc" style="left:254px;width:85px"></div>
<div class="t " style="left:259.3px;top:86px;letter-spacing:-0.081px;">Расположение</div>
<div class="hc" style="left:339px;width:61px"></div>
<div class="t " style="left:344.3px;top:86px;letter-spacing:0.221px;">Тип</div>
<div class="hc" style="left:400px;width:105px"></div>
<div class="t " style="left:405.3px;top:86px;letter-spacing:-0.106px;">Файловая система</div>
<div class="hc" style="left:505px;width:113px"></div>
<div class="t " style="left:510.5px;top:86px;letter-spacing:-0.010px;">Состояние</div>
<div class="hc" style="left:618px;width:55px"></div>
<div class="t " style="left:623.5px;top:86px;letter-spacing:-0.032px;">Емкость</div>
<div class="hc" style="left:673px;width:44px"></div>
<div class="t " style="left:678.3px;top:86px;letter-spacing:0.020px;">Свобод</div>
<svg style="left:210px;top:103px" width="16" height="9" viewBox="0 0 16 9"><path d="M2 0.500H13.500L15.500 1.500V6L13.500 8.500H2L0.500 7V2Z" fill="#d4d4d4" stroke="#484848" stroke-width="1"/><rect x="1.500" y="1.300" width="11.500" height="1.500" fill="#f6f6f6"/><rect x="1.500" y="4.200" width="11.500" height="1" fill="#9c9c9c"/><path d="M1.500 7.800H13.500L15.300 5.800V1.800" fill="none" stroke="#101010" stroke-width="1.400"/><rect x="11" y="3" width="1" height="1" fill="#00c000"/></svg>
<div class="a" style="left:208px;top:100px;width:509px;height:20px;overflow:hidden">
<div class="t " style="left:22.30000000000001px;top:3px;letter-spacing:0.518px;">(C:)</div>
<div class="t " style="left:51.5px;top:3px;letter-spacing:0.107px;">Раздел</div>
<div class="t " style="left:137px;top:3px;letter-spacing:-0.116px;">Основной</div>
<div class="t " style="left:198px;top:3px;letter-spacing:-0.805px;">NTFS</div>
<div class="t " style="left:302.7px;top:3px;letter-spacing:-0.161px;">Исправен (Система)</div>
<div class="t " style="left:416.5px;top:3px;letter-spacing:-0.145px;">19,99 ГБ</div>
<div class="t " style="left:471.20000000000005px;top:3px;letter-spacing:-0.145px;">18,45 ГБ</div>
</div>
<div class="track" style="left:208px;top:235px;width:509px"></div>
<div class="sbtn" style="left:208px;top:236px"></div>
<svg style="left:208px;top:236px" width="16" height="16" viewBox="0 0 16 16"><path d="M9.500 3.700L5.500 7.700L9.500 11.700" fill="none" stroke="#4d6185" stroke-width="2.200"/></svg>
<div class="sbtn" style="left:701px;top:236px"></div>
<svg style="left:701px;top:236px" width="16" height="16" viewBox="0 0 16 16"><path d="M6.500 3.700L10.500 7.700L6.500 11.700" fill="none" stroke="#4d6185" stroke-width="2.200"/></svg>
<div class="thumb" style="left:225px;top:236px;width:287px"></div>
<div class="a" style="left:365px;top:241px;width:1px;height:5px;background:#eef4fe"></div>
<div class="a" style="left:366px;top:242px;width:1px;height:5px;background:#8fa8e0"></div>
<div class="a" style="left:367px;top:241px;width:1px;height:5px;background:#eef4fe"></div>
<div class="a" style="left:368px;top:242px;width:1px;height:5px;background:#8fa8e0"></div>
<div class="a" style="left:369px;top:241px;width:1px;height:5px;background:#eef4fe"></div>
<div class="a" style="left:370px;top:242px;width:1px;height:5px;background:#8fa8e0"></div>
<div class="a" style="left:371px;top:241px;width:1px;height:5px;background:#eef4fe"></div>
<div class="a" style="left:372px;top:242px;width:1px;height:5px;background:#8fa8e0"></div>
<div class="a" style="left:206px;top:252px;width:511px;height:2px;background:#ece9d8"></div>
<div class="a" style="left:206px;top:254px;width:511px;height:1px;background:#fff"></div>
<div class="a" style="left:206px;top:255px;width:511px;height:3px;background:#efecdf"></div>
<div class="a" style="left:208px;top:258px;width:509px;height:1px;background:#b5b2a0"></div>
<div class="a" style="left:208px;top:259px;width:509px;height:1px;background:#716f64"></div>
<div class="a" style="left:206px;top:252px;width:1px;height:207px;background:#aca899"></div>
<div class="a" style="left:207px;top:252px;width:1px;height:207px;background:#716f64"></div>
<div class="a" style="left:206px;top:458px;width:511px;height:2px;background:#fff"></div>
<div class="a" style="left:209px;top:264px;width:483px;height:1px;background:#fff"></div>
<div class="a" style="left:209px;top:265px;width:1px;height:69px;background:#fff"></div>
<div class="a" style="left:209px;top:334px;width:483px;height:1px;background:#aca899"></div>
<div class="a" style="left:209px;top:335px;width:96px;height:1px;background:#aca899"></div>
<div class="a" style="left:305px;top:265px;width:1px;height:69px;background:#fff"></div>
<div class="a" style="left:305px;top:336px;width:1px;height:69px;background:#fff"></div>
<div class="a" style="left:306px;top:265px;width:1px;height:69px;background:#f4f2e8"></div>
<div class="a" style="left:306px;top:336px;width:1px;height:69px;background:#f4f2e8"></div>
<div class="a" style="left:307px;top:265px;width:1px;height:69px;background:#aca899"></div>
<div class="a" style="left:307px;top:336px;width:1px;height:69px;background:#aca899"></div>
<div class="a" style="left:308px;top:265px;width:1px;height:69px;background:#fff"></div>
<div class="a" style="left:308px;top:336px;width:1px;height:69px;background:#fff"></div>
<div class="a" style="left:690px;top:265px;width:1px;height:69px;background:#aca899"></div>
<div class="a" style="left:691px;top:264px;width:1px;height:71px;background:#fff"></div>
<svg style="left:218px;top:271px" width="16" height="11" viewBox="0 0 16 11" shape-rendering="crispEdges"><path d="M2 0H15L14 2H0Z" fill="#8c8c8c" shape-rendering="auto"/><rect x="0" y="2" width="13" height="4" fill="#c2c2c2"/><rect x="0" y="2" width="13" height="1" fill="#dcdcdc"/><path d="M13 2L16 0.500V7L13 9Z" fill="#2a2a2a" shape-rendering="auto"/><rect x="14" y="2" width="1" height="1" fill="#909090"/><rect x="14" y="4" width="1" height="1" fill="#909090"/><rect x="14" y="6" width="1" height="1" fill="#909090"/><path d="M0 5H4V4H8V5H13V9H5V10H2V8H0Z" fill="#101010" shape-rendering="auto"/><path d="M2 7L4 5.500H7V8.500H3Z" fill="#d4d4d4" shape-rendering="auto"/><rect x="9" y="6" width="3" height="2" fill="#b8b8b8"/><rect x="7" y="4" width="3" height="7" fill="#101010"/><rect x="8" y="5" width="1" height="5" fill="#f0e800"/><rect x="11" y="3" width="1" height="1" fill="#00c000"/></svg>
<div class="t b" style="left:235px;top:272px;font-size:11.5px;letter-spacing:0.433px;">Диск 0</div>
<div class="t " style="left:216px;top:286px;letter-spacing:0.071px;">Основной</div>
<div class="t " style="left:216px;top:299px;letter-spacing:0.105px;">19,99 ГБ</div>
<div class="t " style="left:216px;top:312px;letter-spacing:0.423px;">Подключен</div>
<div class="a" style="left:309px;top:268px;width:379px;height:63px;border-top:1px solid #fff;border-left:1px solid #fff;border-right:1px solid #aca899;border-bottom:1px solid #aca899"></div>
<div class="a" style="left:310px;top:269px;width:377px;height:11px;background:#000080"></div>
<div class="a" style="left:310px;top:280px;width:377px;height:1px;background:#fbfaf5"></div>
<div class="a" style="left:313px;top:283px;width:372px;height:45px;border-top:1px solid #9d9a8b;border-left:1px solid #9d9a8b;border-right:1px solid #f6f4ec;border-bottom:1px solid #f6f4ec;background:#fff"></div>
<div class="t b" style="left:322.3px;top:287px;font-size:11.5px;letter-spacing:0.626px;">(C:)</div>
<div class="t " style="left:316px;top:300px;letter-spacing:-0.195px;">19,99 ГБ NTFS</div>
<div class="t " style="left:316px;top:313px;letter-spacing:-0.033px;">Исправен (Система)</div>
<div class="a" style="left:308px;top:335px;width:409px;height:1px;background:#fff"></div>
<div class="a" style="left:209px;top:336px;width:1px;height:69px;background:#aca899"></div>
<div class="a" style="left:209px;top:405px;width:98px;height:1px;background:#fff"></div>
<div class="a" style="left:307px;top:405px;width:410px;height:1px;background:#aca899"></div>
<svg style="left:218px;top:342px" width="16" height="11" viewBox="0 0 16 11" shape-rendering="crispEdges"><path d="M2 0H15L14 2H0Z" fill="#8c8c8c" shape-rendering="auto"/><rect x="0" y="2" width="13" height="4" fill="#c2c2c2"/><rect x="0" y="2" width="13" height="1" fill="#dcdcdc"/><path d="M13 2L16 0.500V7L13 9Z" fill="#2a2a2a" shape-rendering="auto"/><rect x="14" y="2" width="1" height="1" fill="#909090"/><rect x="14" y="4" width="1" height="1" fill="#909090"/><rect x="14" y="6" width="1" height="1" fill="#909090"/><path d="M0 5H4V4H8V5H13V9H5V10H2V8H0Z" fill="#101010" shape-rendering="auto"/><path d="M2 7L4 5.500H7V8.500H3Z" fill="#d4d4d4" shape-rendering="auto"/><rect x="9" y="6" width="3" height="2" fill="#b8b8b8"/><rect x="7" y="4" width="3" height="7" fill="#101010"/><rect x="8" y="5" width="1" height="5" fill="#f0e800"/><rect x="11" y="3" width="1" height="1" fill="#00c000"/></svg>
<svg style="left:222px;top:343px" width="12" height="12" viewBox="0 0 12 12"><circle cx="6" cy="6" r="5.500" fill="#f00000"/><rect x="2.500" y="4.700" width="7" height="2.600" fill="#fff"/></svg>
<div class="t b" style="left:235px;top:343px;font-size:11.5px;letter-spacing:0.333px;">Диск 1</div>
<div class="t " style="left:216px;top:357px;letter-spacing:0.272px;">Нет данных</div>
<div class="t " style="left:216px;top:370px;letter-spacing:0.105px;">40,00 ГБ</div>
<div class="t " style="left:216px;top:383px;letter-spacing:-0.078px;">Не проинициа</div>
<div class="a" style="left:309px;top:339px;width:405px;height:63px;border-top:1px solid #fff;border-left:1px solid #fff;border-right:1px solid #aca899;border-bottom:1px solid #aca899"></div>
<div class="a" style="left:310px;top:340px;width:403px;height:11px;background:#000"></div>
<div class="a" style="left:310px;top:351px;width:403px;height:1px;background:#fbfaf5"></div>
<div class="a" style="left:313px;top:354px;width:398px;height:45px;border-top:1px solid #9d9a8b;border-left:1px solid #9d9a8b;border-right:1px solid #f6f4ec;border-bottom:1px solid #f6f4ec;background:#fff"></div>
<div class="t " style="left:316px;top:371px;letter-spacing:0.105px;">40,00 ГБ</div>
<div class="a" style="left:208px;top:438px;width:509px;height:1px;background:#fff"></div>
<div class="a" style="left:208px;top:438px;width:1px;height:19px;background:#fff"></div>
<div class="a" style="left:208px;top:457px;width:509px;height:1px;background:#a3a090"></div>
<div class="a" style="left:716px;top:439px;width:1px;height:18px;background:#aca899"></div>
<div class="a" style="left:213px;top:441px;width:12px;height:14px;background:#000;border:1px solid #fff"></div>
<div class="t " style="left:229.5px;top:441px;letter-spacing:0.058px;">Не распределен</div>
<div class="a" style="left:4px;top:460px;width:714px;height:22px;background:#eeece1"></div>
<div class="a" style="left:317px;top:441px;width:12px;height:14px;background:#000080;border:1px solid #fff"></div>
<div class="t " style="left:334px;top:441px;">Основной раздел</div>
<div class="a" style="left:4px;top:460px;width:713px;height:1px;background:#aca899"></div>
<div class="a" style="left:4px;top:461px;width:713px;height:1px;background:#d8d5c4"></div>
<div class="a" style="left:4px;top:478px;width:714px;height:4px;background:linear-gradient(180deg,#eae8db,#dddac8)"></div>
<div class="a" style="left:497px;top:464px;width:1px;height:17px;background:#c5c2b2"></div>
<div class="a" style="left:498px;top:464px;width:1px;height:17px;background:#fff"></div>
<div class="a" style="left:630px;top:464px;width:1px;height:17px;background:#c5c2b2"></div>
<div class="a" style="left:631px;top:464px;width:1px;height:17px;background:#fff"></div>
<div class="a" style="left:715px;top:464px;width:1px;height:17px;background:#c5c2b2"></div>
<div class="a" style="left:716px;top:464px;width:1px;height:17px;background:#fff"></div>
<div class="a" style="left:717px;top:81px;width:1px;height:378px;background:#f1efe2"></div>
<div class="a" style="left:718px;top:29px;width:1px;height:454px;background:#fbfaf5"></div>
<div class="a" style="left:3px;top:482px;width:716px;height:1px;background:#efe9cc"></div>
<div class="a" style="left:287px;top:378px;width:167px;height:75px;background:#fff;border:1px solid #aca899;box-shadow:2px 2px 2px rgba(0,0,0,0.45)"></div>
<div class="t " style="left:306.5px;top:383px;letter-spacing:0.054px;">Инициализировать диск</div>
<div class="a" style="left:291px;top:401px;width:159px;height:1px;background:#aca899"></div>
<div class="t " style="left:306.5px;top:409px;letter-spacing:0.187px;">Свойства</div>
<div class="a" style="left:291px;top:427px;width:159px;height:1px;background:#aca899"></div>
<div class="t " style="left:306.5px;top:435px;letter-spacing:0.135px;">Справка</div>
<svg style="left:0;top:0" width="720" height="484" viewBox="0 0 720 484"><ellipse cx="367.5" cy="384.4" rx="103.2" ry="25.4" fill="none" stroke="#fb0505" stroke-width="3.4"/></svg>
</body></html>
